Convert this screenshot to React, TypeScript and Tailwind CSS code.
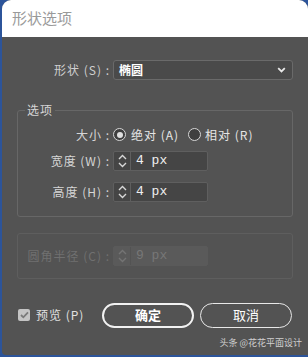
import React from 'react';

const cjk = { fontFamily: '"Noto Sans CJK SC", "Noto Sans", sans-serif' };
const mono = { fontFamily: '"Liberation Mono", "Noto Sans CJK SC", monospace' };

const SpinArrows: React.FC<{ dim?: boolean }> = ({ dim }) => (
  <svg width="9" height="16" viewBox="0 0 9 16" fill="none" stroke={dim ? '#747474' : '#d8d8d8'} strokeWidth="1.4">
    <path d="M1 6l3.5-3.5L8 6" />
    <path d="M1 10l3.5 3.5L8 10" />
  </svg>
);

const Spinner: React.FC<{ value: string; dim?: boolean }> = ({ value, dim }) => (
  <div
    className={`flex h-[20px] w-[95px] items-stretch rounded-[2px] border ${
      dim ? 'border-[#5a5a5a] bg-[#5a5a5a]' : 'border-[#5f5f5f] bg-[#454545]'
    }`}
  >
    <div
      className={`flex w-[17px] items-center justify-center border-r ${
        dim ? 'border-[#535353]' : 'border-[#5f5f5f]'
      }`}
    >
      <SpinArrows dim={dim} />
    </div>
    <span
      className={`pl-[5px] text-[13px] leading-[18px] ${dim ? 'text-[#777777]' : 'text-[#f0f0f0]'}`}
      style={mono}
    >
      {value}
    </span>
  </div>
);

const Radio: React.FC<{ checked?: boolean }> = ({ checked }) => (
  <span className="flex h-[13px] w-[13px] items-center justify-center rounded-full border-[1.5px] border-[#d6d6d6] bg-[#3f3f3f]">
    {checked && <span className="h-[6px] w-[6px] rounded-full bg-[#e0e0e0]" />}
  </span>
);

export default function App() {
  return (
    <div className="h-[357px] w-[308px] bg-[#2c549a]" style={cjk}>
      <div className="ml-[2px] flex h-[355px] w-[306px] flex-col overflow-hidden rounded-t-[9px] rounded-bl-[4px] bg-[#535353]">
        {/* Title bar */}
        <div className="flex h-[37px] items-center bg-white pl-[10px] text-[15px] text-[#9a9a9a]">
          形状选项
        </div>

        {/* Shape select */}
        <div className="mt-[23px] flex h-[20px] items-center">
          <span className="w-[108px] text-right text-[12px] tracking-[1px] text-[#cfcfcf]">形状 (S) :</span>
          <div className="ml-[3px] flex h-[20px] w-[180px] items-center justify-between rounded-[3px] border border-[#6a6a6a] bg-[#4a4a4a] pl-[5px] pr-[6px]">
            <span className="text-[12px] font-bold text-white">椭圆</span>
            <svg width="9" height="6" viewBox="0 0 9 6" fill="none" stroke="#e8e8e8" strokeWidth="1.8">
              <path d="M1.2 1.2l3.3 3.3 3.3-3.3" />
            </svg>
          </div>
        </div>

        {/* Options group */}
        <div className="relative ml-[15px] mt-[30px] h-[107px] w-[276px] rounded-[3px] border border-[#676767] pt-[14px]">
          <span className="absolute left-[7px] top-[-10px] bg-[#535353] px-[2px] text-[12px] leading-[18px] tracking-[1px] text-[#d6d6d6]">
            选项
          </span>
          <div className="flex h-[19px] items-center">
            <span className="w-[92px] text-right text-[12px] tracking-[1px] text-[#d6d6d6]">大小 :</span>
            <span className="ml-[3px] flex items-center gap-[5px]">
              <Radio checked />
              <span className="text-[12px] tracking-[1px] text-[#e6e6e6]">绝对 (A)</span>
            </span>
            <span className="ml-[9px] flex items-center gap-[4px]">
              <Radio />
              <span className="text-[12px] tracking-[1px] text-[#e6e6e6]">相对 (R)</span>
            </span>
          </div>
          <div className="mt-[7px] flex h-[20px] items-center">
            <span className="w-[92px] text-right text-[12px] tracking-[1px] text-[#d6d6d6]">宽度 (W) :</span>
            <span className="ml-[3px]">
              <Spinner value="4 px" />
            </span>
          </div>
          <div className="mt-[11px] flex h-[20px] items-center">
            <span className="w-[92px] text-right text-[12px] tracking-[1px] text-[#d6d6d6]">高度 (H) :</span>
            <span className="ml-[3px]">
              <Spinner value="4 px" />
            </span>
          </div>
        </div>

        {/* Corner radius (disabled) */}
        <div className="ml-[15px] mt-[16px] flex h-[46px] w-[276px] items-center rounded-[3px] border border-[#5e5e5e]">
          <span className="w-[92px] text-right text-[12px] tracking-[1px] text-[#707070]">圆角半径 (C) :</span>
          <span className="ml-[3px]">
            <Spinner value="9 px" dim />
          </span>
        </div>

        {/* Footer */}
        <div className="mt-[23px] flex h-[26px] items-center">
          <span className="ml-[16px] flex h-[12px] w-[12px] items-center justify-center rounded-[2px] bg-[#c4c4c4]">
            <svg width="9" height="8" viewBox="0 0 9 8" fill="none" stroke="#7a7a7a" strokeWidth="1.8">
              <path d="M1 4l2.3 2.3L8 1.3" />
            </svg>
          </span>
          <span className="ml-[6px] w-[66px] text-[12px] tracking-[1px] text-[#e0e0e0]">预览 (P)</span>
          <button className="h-[25px] w-[92px] rounded-full border-2 border-[#f2f2f2] text-[13px] font-bold text-white">
            确定
          </button>
          <button className="ml-[6px] h-[25px] w-[92px] rounded-full border-[1.5px] border-[#e8e8e8] text-[13px] text-white">
            取消
          </button>
        </div>

        <div className="mt-[8px] pr-[6px] text-right text-[9px] text-[#d0d0d0]">头条 @花花平面设计</div>
      </div>
    </div>
  );
}
